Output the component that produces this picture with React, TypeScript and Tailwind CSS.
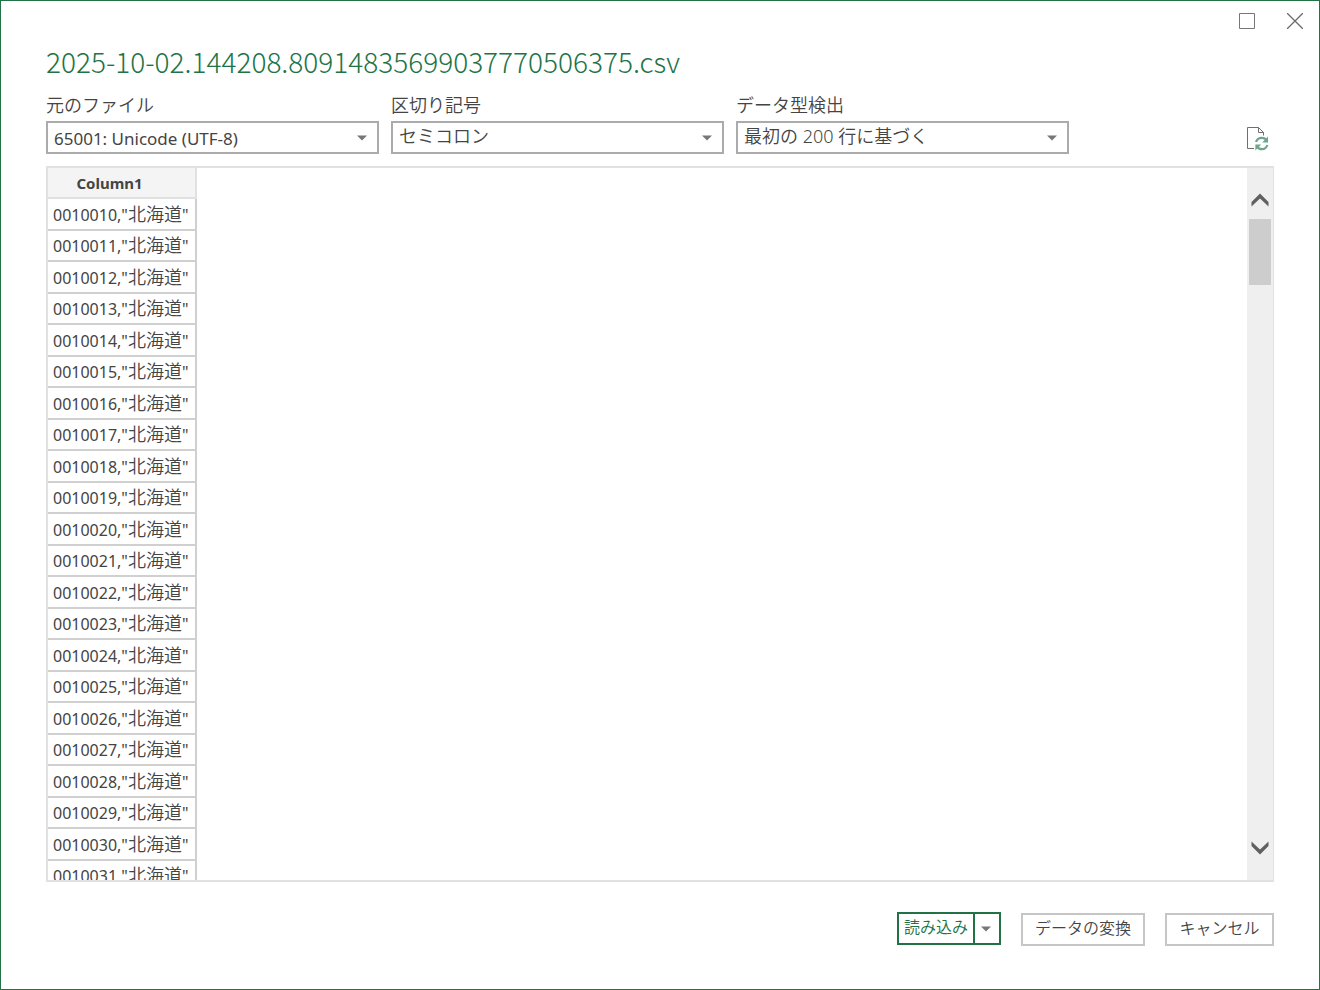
import { useId } from "react";

const jp = "font-['Noto_Sans','Noto_Sans_CJK_JP',sans-serif]";

const rows = Array.from({ length: 22 }, (_, i) => ({
  code: `00100${10 + i}`,
  name: "北海道",
}));

function Caret() {
  return (
    <svg width="10" height="6" viewBox="0 0 10 6" className="shrink-0" aria-hidden="true">
      <path d="M0 0.5H10L5 5.5Z" fill="#777777" />
    </svg>
  );
}

function SelectField({ label, options, latin = false }: { label: string; options: string[]; latin?: boolean }) {
  const id = useId();
  const text = latin ? "text-[17px] font-normal pt-0.5" : "text-lg font-[350] pb-1";
  return (
    <div className="w-[333px] min-w-0">
      <label htmlFor={id} className="block h-7 text-lg leading-6 font-[350]">
        {label}
      </label>
      <div className="grid items-center">
        <select
          id={id}
          className={`col-start-1 row-start-1 h-[33px] w-full appearance-none border-2 border-[#ababab] bg-white pr-8 pl-1.5 leading-6 text-[#444444] ${text}`}
        >
          {options.map((o) => (
            <option key={o}>{o}</option>
          ))}
        </select>
        <span className="pointer-events-none col-start-1 row-start-1 mr-3 justify-self-end">
          <Caret />
        </span>
      </div>
    </div>
  );
}

function ScrollArrow({ down = false }: { down?: boolean }) {
  return (
    <button type="button" aria-label={down ? "下へスクロール" : "上へスクロール"} className="flex h-5 w-full items-center justify-center">
      <svg width="18" height="14" viewBox="0 0 18 14" aria-hidden="true">
        <path d={down ? "M0.5 0.5V5L9 13.5L17.5 5V0.5L9 8.5Z" : "M0.5 13.5V9L9 0.5L17.5 9V13.5L9 5.5Z"} fill="#606060" />
      </svg>
    </button>
  );
}

function RefreshFileIcon() {
  return (
    <svg width="22" height="24" viewBox="0 0 22 24" fill="none" aria-hidden="true">
      <path d="M7 21.5H0.5V0.5H11.5L16.5 5.5V8.5M11.5 0.5V5.5H16.5" stroke="#6f6f6f" />
      <path d="M9 15C10 12 12.2 10.8 14.8 10.8C17 10.8 18.7 11.8 19.6 13.6" stroke="#6fa58c" strokeWidth="2.2" />
      <path d="M21 9.6V15.4H15.2Z" fill="#6fa58c" />
      <path d="M20.4 18C19.4 20.9 17.4 22.2 15 22.2C12.6 22.2 11 21.2 10 19.4" stroke="#6fa58c" strokeWidth="2.2" />
      <path d="M8.4 23.4V17.6H14.2Z" fill="#6fa58c" />
    </svg>
  );
}

export default function App() {
  return (
    <main className={`flex h-screen flex-col border border-[#217346] bg-white text-[#444444] ${jp}`}>
      <div className="flex h-10 shrink-0 items-center justify-end gap-8 pr-4">
        <button type="button" aria-label="最大化">
          <svg width="16" height="16" viewBox="0 0 16 16" fill="none" aria-hidden="true">
            <path d="M0.5 0.5H15.5V15.5H0.5Z" stroke="#777777" />
          </svg>
        </button>
        <button type="button" aria-label="閉じる">
          <svg width="16" height="16" viewBox="0 0 16 16" fill="none" aria-hidden="true">
            <path d="M0 0L16 16M16 0L0 16" stroke="#6a6a6a" strokeWidth="1.3" />
          </svg>
        </button>
      </div>

      <div className="flex min-h-0 flex-1 flex-col px-[45px] pb-[43px]">
        <h1 className="h-[52px] font-['Noto_Sans_CJK_JP',sans-serif] text-[28px] leading-10 font-light whitespace-nowrap text-[#217346]">
          2025-10-02.144208.80914835699037770506375.csv
        </h1>

        <div className="flex items-end justify-between gap-3">
          <div className="flex min-w-0 gap-3">
            <SelectField label="元のファイル" options={["65001: Unicode (UTF-8)"]} latin />
            <SelectField label="区切り記号" options={["セミコロン", "コンマ", "タブ"]} />
            <SelectField label="データ型検出" options={["最初の 200 行に基づく", "データセット全体に基づく"]} />
          </div>
          <button type="button" aria-label="最新の情報に更新" className="mr-[5px] mb-[3px]">
            <RefreshFileIcon />
          </button>
        </div>

        <section className="mt-3 flex min-h-0 flex-1 justify-between border-y-2 border-r border-[#e1e1e1]">
          <div className="min-h-0 overflow-hidden">
            <table className="w-[151px] border-separate border-spacing-0 border-l-2 border-[#e1e1e1]">
              <thead>
                <tr className="h-[31px]">
                  <th className="border-r-2 border-b-2 border-[#e1e1e1] bg-[#f4f4f4] p-0 pr-6 text-[15px] leading-5 font-bold">
                    Column1
                  </th>
                </tr>
              </thead>
              <tbody>
                {rows.map((r) => (
                  <tr key={r.code} className="h-8 even:h-[31px]">
                    <td className="border-r-2 border-b-2 border-[#d0d0d0] p-0 pl-[5px] text-base leading-5 whitespace-nowrap">
                      {r.code},"<span className="text-lg leading-5 font-[350]">{r.name}</span>"
                    </td>
                  </tr>
                ))}
              </tbody>
            </table>
          </div>
          <div className="flex w-[26px] shrink-0 flex-col bg-[#efefef] pt-[22px] pb-[22px]">
            <ScrollArrow />
            <div className="mt-[9px] ml-0.5 h-[66px] w-[22px] bg-[#cdcdcd]" />
            <div className="flex-1" />
            <ScrollArrow down />
          </div>
        </section>

        <footer className="mt-[30px] flex shrink-0 items-start justify-end gap-5 text-base leading-6 font-[350]">
          <div className="flex h-[33px] border-2 border-[#217346]">
            <button type="button" className="w-[74px] pb-1 text-[#217346]">
              読み込み
            </button>
            <button type="button" aria-label="読み込みオプション" className="flex w-[26px] items-center justify-center border-l-2 border-[#217346] pr-0.5">
              <Caret />
            </button>
          </div>
          <button type="button" className="mt-px h-[33px] w-[124px] border-2 border-[#c6c6c6] pb-1">
            データの変換
          </button>
          <button type="button" className="mt-px h-[33px] w-[109px] border-2 border-[#c6c6c6] pb-1">
            キャンセル
          </button>
        </footer>
      </div>
    </main>
  );
}
